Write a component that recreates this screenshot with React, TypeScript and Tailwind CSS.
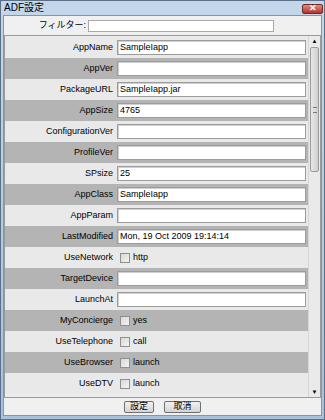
import React from "react";

type Row = {
  name: string;
  value?: string;
  check?: string;
};

const rows: Row[] = [
  { name: "AppName", value: "SampleIapp" },
  { name: "AppVer", value: "" },
  { name: "PackageURL", value: "SampleIapp.jar" },
  { name: "AppSize", value: "4765" },
  { name: "ConfigurationVer", value: "" },
  { name: "ProfileVer", value: "" },
  { name: "SPsize", value: "25" },
  { name: "AppClass", value: "SampleIapp" },
  { name: "AppParam", value: "" },
  { name: "LastModified", value: "Mon, 19 Oct 2009 19:14:14" },
  { name: "UseNetwork", check: "http" },
  { name: "TargetDevice", value: "" },
  { name: "LaunchAt", value: "" },
  { name: "MyConcierge", check: "yes" },
  { name: "UseTelephone", check: "call" },
  { name: "UseBrowser", check: "launch" },
  { name: "UseDTV", check: "launch" },
];

const font = { fontFamily: '"Liberation Sans", "Noto Sans CJK JP", sans-serif' };

export default function App() {
  return (
    <div
      className="w-[325px] h-[420px] bg-gradient-to-b from-[#c4d6ea] to-[#a9c1db] border border-[#5a6f88] flex flex-col text-[9px] text-black overflow-hidden"
      style={font}
    >
      {/* title bar */}
      <div className="h-[13px] flex items-center justify-between pl-[3px] pr-[1px]">
        <span className="text-[10px] leading-none">ADF設定</span>
        <div className="w-[21px] h-[10px] mt-[2px] rounded-[2px] bg-gradient-to-b from-[#e08a7c] to-[#b5302a] border border-[#6e2a25] flex items-center justify-center text-white text-[9px] font-bold leading-none">
          ✕
        </div>
      </div>

      <div className="flex-1 mx-[2px] mb-[3px] mt-[1px] bg-[#f0f0f0] border border-[#8496ac] flex flex-col">
        {/* filter */}
        <div className="h-[19px] flex items-center">
          <div className="w-[84px] text-right pr-[2px]">フィルター:</div>
          <div className="w-[186px] h-[12px] bg-white border border-[#a9a9a9]" />
        </div>

        {/* list */}
        <div className="h-[363px] border border-[#9a9a9a] flex bg-[#ececec]">
          <div className="flex-1 flex flex-col pt-[1px]">
            {rows.map((r, i) => (
              <div
                key={r.name}
                className={`h-[21px] flex items-center shrink-0 ${i % 2 === 0 ? "bg-[#e9e9e9]" : "bg-[#b4b4b4]"}`}
              >
                <div className="w-[112px] text-right pr-[4px]">{r.name}</div>
                {r.check !== undefined ? (
                  <div className="flex items-center gap-[3px] pl-[3px]">
                    <div className="w-[10px] h-[10px] border border-[#8f8f8f] bg-gradient-to-br from-[#d8d8d8] to-[#f4f4f4]" />
                    <span>{r.check}</span>
                  </div>
                ) : (
                  <div className="w-[189px] h-[15px] bg-white border border-[#9c9c9c] shadow-[inset_1px_1px_0_#d0d0d0] flex items-center px-[2px]">
                    {r.value}
                  </div>
                )}
              </div>
            ))}
          </div>
          {/* scrollbar */}
          <div className="w-[12px] bg-[#eaeaea] border-l border-[#d6d6d6] flex flex-col items-center">
            <div className="h-[10px] text-[6px] leading-[10px]">▲</div>
            <div className="w-[9px] h-[125px] mt-[1px] rounded-[2px] bg-gradient-to-r from-[#e8e8e8] to-[#cfcfcf] border border-[#9a9a9a] flex items-center justify-center">
              <div className="w-[4px] h-[6px] border-y border-[#777]" />
            </div>
            <div className="flex-1" />
            <div className="h-[10px] text-[6px] leading-[10px]">▼</div>
          </div>
        </div>

        {/* buttons */}
        <div className="flex-1 flex items-center justify-center gap-[10px]">
          <div className="w-[30px] h-[12px] rounded-[2px] border border-[#707070] bg-gradient-to-b from-[#f2f2f2] to-[#d4d4d4] flex items-center justify-center leading-none">
            設定
          </div>
          <div className="w-[37px] h-[12px] rounded-[2px] border border-[#707070] bg-gradient-to-b from-[#f2f2f2] to-[#d4d4d4] flex items-center justify-center leading-none">
            取消
          </div>
        </div>
      </div>
    </div>
  );
}
